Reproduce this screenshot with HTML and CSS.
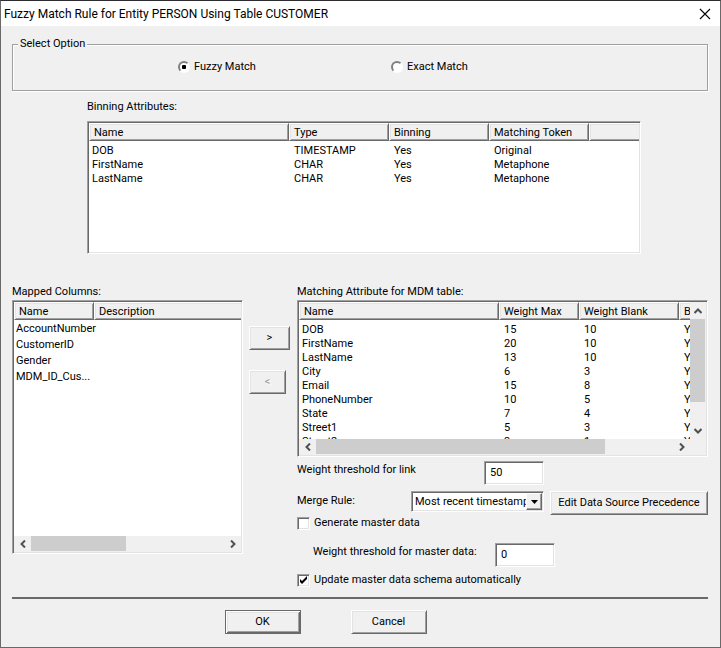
FILE: index.html
```html
<!DOCTYPE html>
<html lang="en">
<head>
<meta charset="utf-8">
<title>Fuzzy Match Rule for Entity PERSON Using Table CUSTOMER</title>
<link rel="stylesheet" href="styles.css">
</head>
<body>
<main class="dialog">
  <header class="titlebar">
    <h1 class="title">Fuzzy Match Rule for Entity PERSON Using Table CUSTOMER</h1>
    <button class="close" type="button" aria-label="Close">
      <svg width="12" height="12" viewBox="0 0 12 12"><path d="M1 1L11 11M11 1L1 11" fill="none" stroke="#000" stroke-width="1.1"/></svg>
    </button>
  </header>
  <form class="content">
    <fieldset class="options">
      <legend>Select Option</legend>
      <div class="option-row">
        <label class="radio"><input type="radio" name="match" checked>Fuzzy Match</label>
        <label class="radio"><input type="radio" name="match">Exact Match</label>
      </div>
    </fieldset>

    <section class="binning">
      <h2 class="caption">Binning Attributes:</h2>
      <div class="list list-binning">
        <table class="grid">
          <colgroup><col class="w200"><col class="w100"><col class="w100"><col class="w100"><col></colgroup>
          <thead><tr><th>Name</th><th>Type</th><th>Binning</th><th>Matching Token</th><th></th></tr></thead>
          <tbody>
            <tr><td>DOB</td><td>TIMESTAMP</td><td>Yes</td><td>Original</td><td></td></tr>
            <tr><td>FirstName</td><td>CHAR</td><td>Yes</td><td>Metaphone</td><td></td></tr>
            <tr><td>LastName</td><td>CHAR</td><td>Yes</td><td>Metaphone</td><td></td></tr>
          </tbody>
        </table>
      </div>
    </section>

    <div class="mapping">
      <section class="pane">
        <h2 class="caption">Mapped Columns:</h2>
        <div class="list list-mapped">
          <div class="view">
            <table class="grid roomy">
              <colgroup><col class="w80"><col></colgroup>
              <thead><tr><th>Name</th><th>Description</th></tr></thead>
              <tbody>
                <tr><td>AccountNumber</td><td></td></tr>
                <tr><td>CustomerID</td><td></td></tr>
                <tr><td>Gender</td><td></td></tr>
                <tr><td>MDM_ID_Cus...</td><td></td></tr>
              </tbody>
            </table>
          </div>
          <div class="hbar">
            <button type="button" aria-label="Scroll left"><svg width="8" height="8" viewBox="0 0 8 8"><path d="M6 0.5L2.5 4L6 7.5"/></svg></button>
            <div class="track"><div class="thumb thumb-mapped"></div></div>
            <button type="button" aria-label="Scroll right"><svg width="8" height="8" viewBox="0 0 8 8"><path d="M2 0.5L5.5 4L2 7.5"/></svg></button>
          </div>
        </div>
      </section>

      <div class="movers">
        <button class="btn btn-add" type="button">&gt;</button>
        <button class="btn btn-back" type="button" disabled>&lt;</button>
      </div>

      <section class="pane">
        <h2 class="caption">Matching Attribute for MDM table:</h2>
        <div class="list list-matching">
          <div class="scroll-row">
            <div class="view">
              <table class="grid wide">
                <colgroup><col class="w200"><col class="w80"><col class="w100"><col class="w100"></colgroup>
                <thead><tr><th>Name</th><th>Weight Max</th><th>Weight Blank</th><th>Binning</th></tr></thead>
                <tbody>
                  <tr><td>DOB</td><td>15</td><td>10</td><td>Yes</td></tr>
                  <tr><td>FirstName</td><td>20</td><td>10</td><td>Yes</td></tr>
                  <tr><td>LastName</td><td>13</td><td>10</td><td>Yes</td></tr>
                  <tr><td>City</td><td>6</td><td>3</td><td>Yes</td></tr>
                  <tr><td>Email</td><td>15</td><td>8</td><td>Yes</td></tr>
                  <tr><td>PhoneNumber</td><td>10</td><td>5</td><td>Yes</td></tr>
                  <tr><td>State</td><td>7</td><td>4</td><td>Yes</td></tr>
                  <tr><td>Street1</td><td>5</td><td>3</td><td>Yes</td></tr>
                  <tr><td>Street2</td><td>3</td><td>1</td><td>Yes</td></tr>
                </tbody>
              </table>
            </div>
            <div class="vbar">
              <button type="button" aria-label="Scroll up"><svg width="8" height="8" viewBox="0 0 8 8"><path d="M0.5 6L4 2.5L7.5 6"/></svg></button>
              <div class="track"><div class="thumb thumb-rows"></div></div>
              <button type="button" aria-label="Scroll down"><svg width="8" height="8" viewBox="0 0 8 8"><path d="M0.5 2L4 5.5L7.5 2"/></svg></button>
            </div>
          </div>
          <div class="hbar hbar-corner">
            <button type="button" aria-label="Scroll left"><svg width="8" height="8" viewBox="0 0 8 8"><path d="M6 0.5L2.5 4L6 7.5"/></svg></button>
            <div class="track"><div class="thumb thumb-matching"></div></div>
            <button type="button" aria-label="Scroll right"><svg width="8" height="8" viewBox="0 0 8 8"><path d="M2 0.5L5.5 4L2 7.5"/></svg></button>
          </div>
        </div>

        <div class="field field-link">
          <label for="link-threshold">Weight threshold for link</label>
          <input class="text" id="link-threshold" type="text" value="50">
        </div>
        <div class="field field-merge">
          <label for="merge-rule">Merge Rule:</label>
          <div class="combo">
            <select id="merge-rule"><option>Most recent timestamp</option></select>
            <span class="drop"><svg width="7" height="4" viewBox="0 0 7 4"><path d="M0 0H7L3.5 4Z"/></svg></span>
          </div>
          <button class="btn btn-edit" type="button">Edit Data Source Precedence</button>
        </div>
        <label class="check"><input type="checkbox">Generate master data</label>
        <div class="field field-master">
          <label for="master-threshold">Weight threshold for master data:</label>
          <input class="text" id="master-threshold" type="text" value="0">
        </div>
        <label class="check"><input type="checkbox" checked>Update master data schema automatically</label>
      </section>
    </div>

    <footer class="actions">
      <button class="btn btn-default" type="button">OK</button>
      <button class="btn" type="button">Cancel</button>
    </footer>
  </form>
</main>
</body>
</html>
```
FILE: styles.css
```css
* {
  box-sizing: border-box;
}

body {
  margin: 0;
  background: #f0f0f0;
}

.dialog,
.dialog button,
.dialog input,
.dialog select {
  font-family: Roboto, "Noto Sans", sans-serif;
  font-size: 11px;
  line-height: 16px;
  color: #000;
}

.dialog {
  min-height: 100vh;
  border: 1px solid #696969;
  border-top-color: #2b2b30;
  background: #f0f0f0;
}

.titlebar {
  display: flex;
  align-items: center;
  justify-content: space-between;
  height: 25px;
  padding: 0 9px 0 3px;
  background: #fff;
}

.title {
  margin: 0;
  font-size: 12px;
  font-weight: 400;
  line-height: 24px;
  white-space: nowrap;
}

.close {
  display: flex;
  padding: 0;
  border: 0;
  background: none;
}

.content {
  padding: 10px 12px 0 11px;
}

.options {
  margin: 0;
  padding: 7px 0 15px;
  border: 1px solid #a0a0a0;
  box-shadow: 1px 1px 0 #fff, inset 1px 1px 0 #fff;
}

.options legend {
  margin-left: 5px;
  padding: 0 2px;
  background: #f0f0f0;
}

.option-row {
  display: flex;
  padding-left: 165px;
}

.radio {
  display: flex;
  align-items: center;
  gap: 4px;
  width: 213px;
}

.radio input {
  appearance: none;
  width: 12px;
  height: 12px;
  margin: 0;
  border: 2px solid;
  border-color: #808080 #fff #fff #808080;
  border-radius: 50%;
  background: #fff;
}

.radio input:checked {
  background: radial-gradient(circle, #000 2px, #fff 2.5px);
}

.caption {
  margin: 0;
  font-size: 11px;
  font-weight: 400;
  line-height: 16px;
}

.binning {
  margin: 8px 67px 30px 75px;
}

.binning .caption {
  margin-bottom: 6px;
}

.list,
.text,
.combo {
  border: 1px solid;
  border-color: #a0a0a0 #fff #fff #a0a0a0;
  background: #fff;
  box-shadow: inset 1px 1px 0 #696969, inset -1px -1px 0 #e3e3e3;
}

.list {
  display: flex;
  flex-direction: column;
  padding: 1px;
  overflow: hidden;
}

.list-binning {
  min-height: 133px;
}

.list-mapped {
  min-height: 254px;
}

.list-matching {
  height: 157px;
}

.view {
  flex: 1;
  min-width: 0;
  overflow: hidden;
}

.grid {
  width: 100%;
  table-layout: fixed;
  border-collapse: separate;
  border-spacing: 0;
}

.grid.wide {
  width: 480px;
}

.w80 {
  width: 80px;
}

.w100 {
  width: 100px;
}

.w200 {
  width: 200px;
}

.grid th {
  height: 18px;
  padding: 2px 4px 0;
  border: 1px solid;
  border-color: #fff #696969 #696969 #fff;
  background: #f0f0f0;
  box-shadow: inset 1px 1px 0 #e3e3e3, inset -1px -1px 0 #a0a0a0;
  font-weight: 400;
  line-height: 14px;
  text-align: left;
  white-space: nowrap;
}

.grid th:last-child {
  border-right: 0;
  box-shadow: inset 1px 1px 0 #e3e3e3, inset 0 -1px 0 #a0a0a0;
}

.grid td {
  height: 14px;
  padding: 0 5px;
  line-height: 14px;
  white-space: nowrap;
}

.grid td:first-child {
  padding: 0 0 0 3px;
}

.grid tbody::before {
  content: "";
  display: block;
  height: 3px;
}

.grid.roomy tbody::before {
  height: 1px;
}

.grid.roomy td {
  height: 16px;
  line-height: 16px;
}

.grid.roomy td:first-child {
  padding-left: 2px;
}

.scroll-row {
  display: flex;
  flex: 1;
  min-height: 0;
}

.hbar,
.vbar {
  display: flex;
  flex: none;
  background: #f0f0f0;
}

.hbar {
  height: 16px;
}

.hbar-corner {
  padding-right: 16px;
}

.vbar {
  flex-direction: column;
  width: 16px;
}

.hbar button,
.vbar button {
  display: flex;
  align-items: center;
  justify-content: center;
  flex: none;
  width: 17px;
  height: 16px;
  padding: 0;
  border: 0;
  background: none;
}

.vbar button {
  width: 16px;
  height: 17px;
}

.hbar path,
.vbar path {
  fill: none;
  stroke: #505050;
  stroke-width: 2;
}

.track {
  flex: 1;
}

.thumb {
  height: 15px;
  background: #cdcdcd;
}

.thumb-mapped {
  width: 49%;
}

.thumb-matching {
  width: 81%;
}

.thumb-rows {
  width: 15px;
  height: 81%;
}

.mapping {
  display: grid;
  grid-template-columns: 231fr 42px 411fr;
  gap: 6px;
  padding-bottom: 9px;
  border-bottom: 2px solid #696969;
}

.pane {
  min-width: 0;
}

.movers {
  display: flex;
  flex-direction: column;
  gap: 20px;
  padding-top: 42px;
}

.btn {
  height: 24px;
  padding: 0;
  border: 1px solid;
  border-color: #fff #696969 #696969 #fff;
  border-radius: 0;
  background: #f0f0f0;
  box-shadow: inset 1px 1px 0 #e3e3e3, inset -1px -1px 0 #a0a0a0;
}

.dialog .btn:disabled {
  color: #a0a0a0;
  text-shadow: 1px 1px 0 #fff;
}

.btn-add {
  width: 41px;
}

.btn-back {
  width: 37px;
}

.field {
  display: flex;
  align-items: flex-start;
}

.field label {
  line-height: 18px;
}

.text {
  width: 60px;
  height: 24px;
  padding: 0 5px 2px;
  border-radius: 0;
}

.field-link {
  margin-top: 4px;
}

.field-link label {
  width: 187px;
}

.field-merge {
  margin-top: 6px;
}

.field-merge label {
  width: 114px;
  line-height: 20px;
}

.combo {
  position: relative;
  width: 133px;
  height: 21px;
  padding: 1px;
}

.combo select {
  appearance: none;
  display: block;
  width: 100%;
  height: 17px;
  padding: 0 0 0 2px;
  border: 0;
  border-radius: 0;
  background: none;
  line-height: 17px;
}

.drop {
  position: absolute;
  top: 1px;
  right: 1px;
  display: flex;
  align-items: center;
  justify-content: center;
  width: 16px;
  height: 17px;
  border: 1px solid;
  border-color: #fff #696969 #696969 #fff;
  background: #f0f0f0;
  box-shadow: inset -1px -1px 0 #a0a0a0;
  pointer-events: none;
}

.btn-edit {
  flex: 1;
  margin-left: 6px;
  white-space: nowrap;
}

.check {
  display: flex;
  align-items: center;
  gap: 4px;
}

.check input {
  appearance: none;
  width: 13px;
  height: 13px;
  margin: 0;
  border: 1px solid;
  border-color: #a0a0a0 #fff #fff #a0a0a0;
  background: #fff;
  box-shadow: inset 1px 1px 0 #696969, inset -1px -1px 0 #e3e3e3;
}

.check input:checked {
  background: #fff url("data:image/svg+xml,%3Csvg xmlns='http://www.w3.org/2000/svg' viewBox='0 0 11 11'%3E%3Cpath d='M2 4L4 6L9 1V4L4 9L2 7Z'/%3E%3C/svg%3E") center / 11px 11px no-repeat;
}

.field-master {
  margin: 12px 0 5px;
  padding-left: 16px;
}

.field-master label {
  width: 182px;
}

.actions {
  display: flex;
  justify-content: center;
  gap: 50px;
  margin: 11px 69px 12px 0;
}

.actions .btn {
  width: 76px;
}

.actions .btn-default {
  border-color: #696969;
  box-shadow: inset 1px 1px 0 #fff, inset -1px -1px 0 #696969, inset 2px 2px 0 #e3e3e3, inset -2px -2px 0 #a0a0a0;
}
```
